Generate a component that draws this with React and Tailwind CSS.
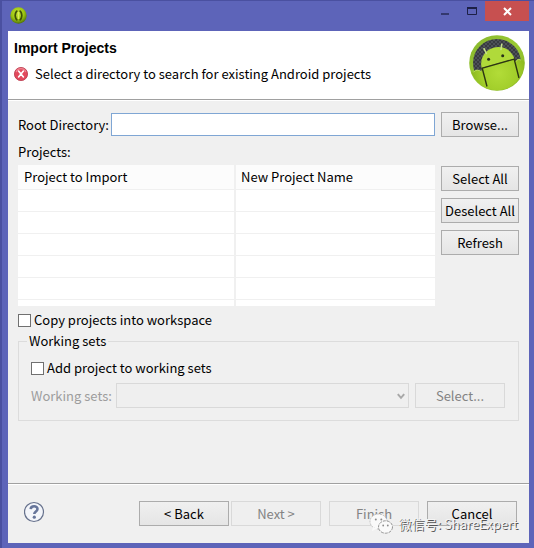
import React from 'react';
import clsx from 'clsx';

const columns = ['Project to Import', 'New Project Name'];
const emptyRows = [0, 1, 2, 3, 4];

function DialogButton({ children, disabled, className }) {
  return (
    <button
      type="button"
      disabled={disabled}
      className={clsx(
        'h-[25px] border text-center leading-5 whitespace-nowrap',
        disabled
          ? 'border-[#d9d9d9] bg-[#efefef] text-[#838383]'
          : 'border-[#acacac] bg-linear-to-b from-[#f0f0f0] to-[#e5e5e5] text-black',
        className
      )}
    >
      {children}
    </button>
  );
}

function AppIcon() {
  return (
    <svg className="size-[17px]" viewBox="0 0 17 17" aria-hidden="true">
      <defs>
        <radialGradient id="app-green" cx="45%" cy="35%" r="65%">
          <stop offset="0" stopColor="#c6e430" />
          <stop offset="0.6" stopColor="#9cc512" />
          <stop offset="1" stopColor="#4f7208" />
        </radialGradient>
      </defs>
      <circle cx="8.5" cy="8.5" r="8.2" fill="url(#app-green)" />
      <path d="M7.4 3.8C5.4 4.6 5.4 6.6 5.2 8.5C5.4 10.4 5.4 12.4 7.4 13.2" fill="none" stroke="#3c4f08" strokeWidth="1.7" />
      <path d="M9.6 3.8C11.6 4.6 11.6 6.6 11.8 8.5C11.6 10.4 11.6 12.4 9.6 13.2" fill="none" stroke="#3c4f08" strokeWidth="1.7" />
      <path d="M8.5 5V12" stroke="#d9ef58" strokeWidth="1.4" />
    </svg>
  );
}

function ErrorIcon() {
  return (
    <svg className="size-[14px] shrink-0" viewBox="0 0 14 14" aria-hidden="true">
      <circle cx="7" cy="7" r="6.6" fill="#e2495c" stroke="#b93a4c" strokeWidth="0.8" />
      <path d="M2.2 5.2A5 5 0 0 1 11.8 5.2" fill="none" stroke="#ee8592" strokeWidth="1.2" />
      <path d="M4.6 4L9.4 10M9.4 4L4.6 10" stroke="#fff" strokeWidth="1.6" strokeLinecap="round" />
    </svg>
  );
}

function AndroidLogo() {
  return (
    <svg className="size-14 shrink-0" viewBox="0 0 56 56" aria-hidden="true">
      <defs>
        <linearGradient id="ring" x1="0" y1="0" x2="1" y2="1">
          <stop offset="0" stopColor="#86b52c" />
          <stop offset="0.5" stopColor="#9aca33" />
          <stop offset="1" stopColor="#86b022" />
        </linearGradient>
        <radialGradient id="body" gradientUnits="userSpaceOnUse" cx="30" cy="38" r="30">
          <stop offset="0" stopColor="#b2dc38" />
          <stop offset="0.6" stopColor="#a2ce2a" />
          <stop offset="1" stopColor="#86b31e" />
        </radialGradient>
        <pattern id="mesh" width="4" height="4" patternUnits="userSpaceOnUse">
          <rect width="4" height="4" fill="#383a40" />
          <rect width="2" height="2" fill="#4d5058" />
          <rect x="2" y="2" width="2" height="2" fill="#4d5058" />
        </pattern>
        <clipPath id="disc">
          <circle cx="28" cy="28" r="27.2" />
        </clipPath>
      </defs>
      <circle cx="28" cy="28" r="27.8" fill="url(#ring)" />
      <circle cx="28" cy="28" r="24" fill="url(#mesh)" />
      <g clipPath="url(#disc)">
        {/* arms and torso fill everything below the shoulders */}
        <path
          d="M0 38L4 37Q8 33 12 36.5L13.2 33L45.5 24L46.6 26.5Q49 22.5 52 25L56 27V56H0Z"
          fill="url(#body)"
        />
        {/* head */}
        <path d="M12.6 33C8 12 38 3 45.5 23.8Z" fill="#b0da3a" />
        <path d="M17.4 18.5L15 13.6M32 14.5L32.8 9.2" stroke="#c6e28a" strokeWidth="1.6" strokeLinecap="round" />
        <path d="M12.5 33.3L46 23.9M13.3 33.5L18 51.5M45.3 24.5L50 43" fill="none" stroke="#2d3612" strokeWidth="1.4" />
        <path d="M4.5 37Q8.5 33.5 12 36.5M46.8 26.5Q49 23 52 25" fill="none" stroke="#c4e46a" strokeWidth="0.8" />
      </g>
      <circle cx="19.6" cy="24.3" r="1.5" fill="#27311a" />
      <circle cx="33.7" cy="20.7" r="1.5" fill="#27311a" />
    </svg>
  );
}

function TitleBar() {
  return (
    <header className="flex h-[30px] items-start justify-between pl-0.5">
      <div className="pt-1.5">
        <AppIcon />
      </div>
      <div className="flex">
        <button type="button" aria-label="Minimize" className="flex h-5 w-[27px] items-center justify-center">
          <svg className="h-5 w-[26px]" viewBox="0 0 26 20" aria-hidden="true">
            <path d="M8 13H16" stroke="#33386e" strokeWidth="2" />
          </svg>
        </button>
        <button type="button" aria-label="Maximize" className="flex h-5 w-[26px] items-center justify-center">
          <svg className="h-5 w-[26px]" viewBox="0 0 26 20" aria-hidden="true">
            <path d="M8.5 6V13.5H17.5V6" fill="none" stroke="#1d2046" />
            <path d="M8 7H18" stroke="#1d2046" strokeWidth="2" />
          </svg>
        </button>
        <button type="button" aria-label="Close" className="flex h-5 w-11 items-center justify-center bg-[#c75050]">
          <svg className="h-5 w-11" viewBox="0 0 44 20" aria-hidden="true">
            <path d="M19 7L26 14M26 7L19 14" stroke="#fff" strokeWidth="2" />
          </svg>
        </button>
      </div>
    </header>
  );
}

function ProjectTable() {
  return (
    <table className="h-[141px] w-full table-fixed border-collapse bg-white text-left">
      <thead>
        <tr className="h-6 bg-[#fcfcfc]">
          {columns.map((name, i) => (
            <th
              key={name}
              scope="col"
              className={clsx(
                'border-b border-[#f0f0f0] p-0 leading-5 font-normal',
                i === 0 ? 'w-[217px] border-r-2 pl-1.5' : 'pl-[5px]'
              )}
            >
              {name}
            </th>
          ))}
        </tr>
      </thead>
      <tbody>
        {emptyRows.map((row) => (
          <tr key={row} className="h-[22px]">
            <td className="border-r-2 border-b border-[#f0f0f0] p-0" />
            <td className="border-b border-[#f0f0f0] p-0" />
          </tr>
        ))}
        <tr>
          <td className="border-r-2 border-[#f0f0f0] p-0" />
          <td className="p-0" />
        </tr>
      </tbody>
    </table>
  );
}

function WorkingSets() {
  return (
    <fieldset className="mt-px border border-[#dcdcdc] pr-[13px] pb-3 pl-3">
      <legend className="-ml-1 px-0.5 leading-5">Working sets</legend>
      <label className="mt-[7px] flex items-center gap-[3px] leading-5">
        <input
          type="checkbox"
          className="size-[13px] appearance-none border border-[#707070] bg-white checked:bg-[#707070]"
        />
        Add project to working sets
      </label>
      <div className="mt-[5px] flex items-center">
        <label htmlFor="working-set" className="w-[85px] whitespace-nowrap text-[#9d9d9d]">
          Working sets:
        </label>
        <div className="relative flex-1">
          <select
            id="working-set"
            disabled
            className="block h-[25px] w-full appearance-none border border-[#d9d9d9] bg-[#efefef]"
          />
          <svg className="absolute top-[9px] right-1 h-2 w-2" viewBox="0 0 8 8" aria-hidden="true">
            <path d="M0.8 2.2L4 5.8L7.2 2.2" fill="none" stroke="#a8a8a8" strokeWidth="2" />
          </svg>
        </div>
        <DialogButton disabled className="ml-1.5 w-[90px]">
          Select...
        </DialogButton>
      </div>
    </fieldset>
  );
}

function Watermark() {
  return (
    <div className="pointer-events-none absolute right-[11px] bottom-[8px] flex items-center gap-1.5">
      <svg className="h-[22px] w-6" viewBox="0 0 24 22" aria-hidden="true">
        <ellipse cx="9.5" cy="8.5" rx="8.5" ry="7.5" fill="#fafafa" stroke="#b5b5b5" strokeWidth="0.8" strokeDasharray="2 1" />
        <path d="M4 14L3 18L8 15.5Z" fill="#fafafa" />
        <ellipse cx="16.5" cy="14" rx="7" ry="6.2" fill="#fafafa" stroke="#888" strokeWidth="0.9" strokeDasharray="3 1" />
        <circle cx="6.8" cy="6.5" r="1" fill="#8c8c8c" />
        <circle cx="12.3" cy="6.5" r="1" fill="#8c8c8c" />
        <circle cx="14.2" cy="12.5" r="0.9" fill="#8c8c8c" />
        <circle cx="18.8" cy="12.5" r="0.9" fill="#8c8c8c" />
      </svg>
      <span className="leading-5 whitespace-nowrap text-[#f4f4f4] [text-shadow:1px_1px_0_#555]">
        微信号: ShareExpert
      </span>
    </div>
  );
}

export default function App() {
  return (
    <div className="flex min-h-screen flex-col border-t border-l-2 border-[#4a50a0] bg-[#5d64b9] pr-[5px] pb-[5px] pl-1.5 font-['Noto_Sans_CJK_SC','Noto_Sans',sans-serif] text-[13px] text-black">
      <TitleBar />
      <main className="relative flex flex-1 flex-col bg-[#f0f0f0]">
        <section className="flex h-[69px] justify-between border-b border-[#a0a0a0] bg-white pt-1 pr-1 pl-1.5">
          <div>
            <h1 className="mt-[3px] font-['Liberation_Sans',Arial,sans-serif] text-sm leading-5 font-bold">Import Projects</h1>
            <p className="mt-1 flex items-center gap-[7px] leading-6">
              <ErrorIcon />
              Select a directory to search for existing Android projects
            </p>
          </div>
          <AndroidLogo />
        </section>

        <section className="flex flex-1 flex-col border-t border-white px-2.5 pt-[11px]">
          <div className="flex items-center">
            <label htmlFor="root-directory" className="w-[93px] whitespace-nowrap">
              Root Directory:
            </label>
            <input
              id="root-directory"
              type="text"
              className="h-[23px] min-w-0 flex-1 border border-[#7fa6d4] bg-white px-1 outline-none"
            />
            <DialogButton className="ml-1.5 w-[78px]">Browse...</DialogButton>
          </div>
          <p className="mt-[3px] mb-px leading-6">Projects:</p>
          <div className="flex items-start gap-1.5">
            <div className="flex-1">
              <ProjectTable />
            </div>
            <div className="flex w-[78px] flex-col gap-[7px] pt-px">
              <DialogButton>Select All</DialogButton>
              <DialogButton>Deselect All</DialogButton>
              <DialogButton>Refresh</DialogButton>
            </div>
          </div>
          <label className="mt-1 flex items-center gap-[3px] leading-5">
            <input
              type="checkbox"
              className="size-[13px] appearance-none border border-[#707070] bg-white checked:bg-[#707070]"
            />
            Copy projects into workspace
          </label>
          <WorkingSets />
        </section>

        <footer className="flex h-[60px] items-start border-t border-[#a0a0a0] pt-[17px] pr-3 pl-4 shadow-[inset_0_1px_0_#fff]">
          <button type="button" aria-label="Help" className="size-[22px]">
            <svg className="size-[22px]" viewBox="0 0 22 22" aria-hidden="true">
              <circle cx="10" cy="11" r="9.5" fill="#f3f5fa" stroke="#66718c" strokeWidth="1.2" />
              <path
                d="M6.7 8.1C6.9 4.3 13.5 4.3 13.5 8C13.5 10.5 10.3 10.5 10.3 13.1"
                fill="none"
                stroke="#66759a"
                strokeWidth="2.6"
              />
              <circle cx="10.3" cy="16.2" r="1.6" fill="#66759a" />
            </svg>
          </button>
          <div className="flex flex-1 justify-end gap-2">
            <div className="flex gap-0.5">
              <DialogButton className="w-[90px]">&lt; Back</DialogButton>
              <DialogButton disabled className="w-[90px]">
                Next &gt;
              </DialogButton>
            </div>
            <DialogButton disabled className="w-[90px]">
              Finish
            </DialogButton>
            <DialogButton className="w-[90px]">Cancel</DialogButton>
          </div>
        </footer>
        <Watermark />
      </main>
    </div>
  );
}
